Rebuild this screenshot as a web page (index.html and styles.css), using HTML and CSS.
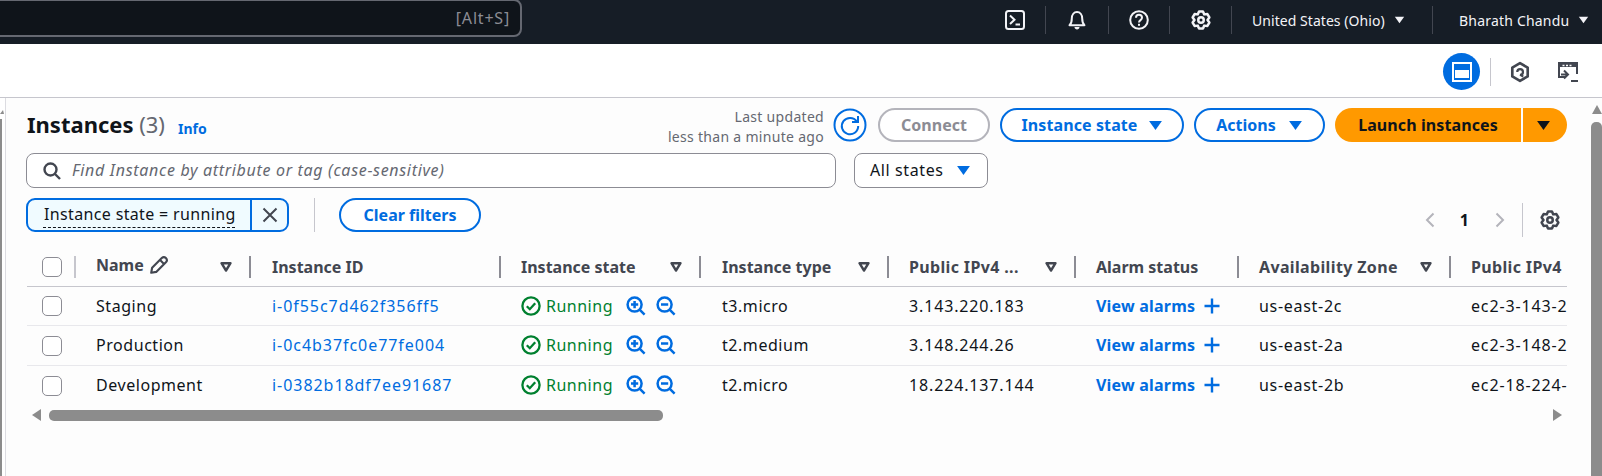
FILE: index.html
```html
<!DOCTYPE html>
<html>
<head>
    <title>Instances | EC2</title>
    <link rel="stylesheet" href="styles.css">
</head>
<body>
    <svg class="defs" width="0" height="0">
        <symbol id="gear" viewBox="0 0 16 16">
            <polygon points="6.43,1.18 9.57,1.18 10.6,3.5 13.12,3.23 14.69,5.95 13.2,8 14.69,10.05 13.12,12.77 10.6,12.5 9.57,14.82 6.43,14.82 5.4,12.5 2.88,12.77 1.31,10.05 2.8,8 1.31,5.95 2.88,3.23 5.4,3.5" fill="none" stroke="currentColor" stroke-width="2" stroke-linejoin="round"/>
            <circle cx="8" cy="8" r="2.2" fill="none" stroke="currentColor" stroke-width="2"/>
        </symbol>
        <symbol id="sort" viewBox="0 0 12 10">
            <polygon points="1.5,1.2 10.5,1.2 6,8.5" fill="none" stroke="currentColor" stroke-width="2.4" stroke-linejoin="round"/>
        </symbol>
        <symbol id="caret" viewBox="0 0 16 12">
            <polygon points="1,1 15,1 8,11" fill="currentColor"/>
        </symbol>
        <symbol id="ok" viewBox="0 0 20 20">
            <circle cx="10" cy="10" r="8.6" fill="none" stroke="currentColor" stroke-width="2.3"/>
            <path d="M5.8 10.2l3 3 5.4-6" fill="none" stroke="currentColor" stroke-width="2.3"/>
        </symbol>
        <symbol id="zoomin" viewBox="0 0 20 20">
            <circle cx="8.6" cy="8.6" r="7" fill="none" stroke="currentColor" stroke-width="2.5"/>
            <path d="M13.6 13.6l5 5M5 8.6h7.2M8.6 5v7.2" fill="none" stroke="currentColor" stroke-width="2.5"/>
        </symbol>
        <symbol id="zoomout" viewBox="0 0 20 20">
            <circle cx="8.6" cy="8.6" r="7" fill="none" stroke="currentColor" stroke-width="2.5"/>
            <path d="M13.6 13.6l5 5M5 8.6h7.2" fill="none" stroke="currentColor" stroke-width="2.5"/>
        </symbol>
        <symbol id="plus" viewBox="0 0 16 16">
            <path d="M8 0.5v15M0.5 8h15" fill="none" stroke="currentColor" stroke-width="2.4"/>
        </symbol>
    </svg>

    <!-- top nav -->
    <header class="topbar">
        <div class="global-search">[Alt+S]</div>
        <nav class="top-nav">
            <div class="nav-item nav-first">
                <svg class="nav-icon" viewBox="0 0 20 20"><rect x="1" y="1" width="18" height="18" rx="2.5" fill="none" stroke="currentColor" stroke-width="2"/><path d="M5 5.5l4.5 4.2L5 14M10.5 14.5h4.5" fill="none" stroke="currentColor" stroke-width="2"/></svg>
            </div>
            <div class="nav-item nav-bell">
                <svg class="nav-icon" viewBox="0 0 20 20"><path d="M2.500 15.200c1.800-1.500 2.300-3 2.300-6.700C4.800 4.800 7 2 10 2s5.200 2.800 5.200 6.500c0 3.700.5 5.200 2.300 6.700z" fill="none" stroke="currentColor" stroke-width="2" stroke-linejoin="round"/><path d="M7.500 17h5c0 1.500-1.200 2.500-2.500 2.500S7.500 18.500 7.500 17z" fill="currentColor"/></svg>
            </div>
            <div class="nav-item nav-help">
                <svg class="nav-icon" viewBox="0 0 20 20"><circle cx="10" cy="10" r="8.800" fill="none" stroke="currentColor" stroke-width="2"/><path d="M7 7.800c0-4 6-4 6 0 0 2.300-3 2.300-3 4.700" fill="none" stroke="currentColor" stroke-width="2"/><rect x="9" y="13.800" width="2" height="2" fill="currentColor"/></svg>
            </div>
            <div class="nav-item nav-gear">
                <svg class="nav-icon"><use href="#gear"/></svg>
            </div>
            <div class="nav-item nav-region">United States (Ohio)<svg class="nav-caret"><use href="#caret"/></svg></div>
            <div class="nav-item nav-user">Bharath Chandu<svg class="nav-caret"><use href="#caret"/></svg></div>
        </nav>
    </header>

    <!-- second bar -->
    <div class="subbar">
        <div class="round-btn">
            <svg width="20" height="20" viewBox="0 0 20 20"><rect x="1" y="1" width="18" height="18" fill="none" stroke="#fff" stroke-width="2"/><rect x="3" y="8" width="14" height="8" fill="#fff"/></svg>
        </div>
        <span class="subbar-sep"></span>
        <svg class="sub-icon sub-hex" viewBox="0 0 20 20"><polygon points="10,2 17,6 17,14 10,18 3,14 3,6" fill="none" stroke="#424650" stroke-width="2.400" stroke-linejoin="round"/><path d="M7.500 10a2.600 2.600 0 1 1 2.600 2.600L13 14" fill="none" stroke="#424650" stroke-width="2"/></svg>
        <svg class="sub-icon sub-term" viewBox="0 0 22 22"><path d="M8 16H2V2h18v11" fill="none" stroke="#424650" stroke-width="2"/><path d="M2 3h18v3H2z" fill="#424650"/><path d="M5.500 4.500h2M9 4.500h2M12.500 4.500h2" stroke="#fff" stroke-width="1.500"/><path d="M7 9.500l4 4-4 4M4 13.500h7M14 20h7" fill="none" stroke="#424650" stroke-width="2"/></svg>
    </div>

    <div class="main">
        <div class="rail"><span class="rail-arrow"></span><span class="rail-bar"></span></div>

        <div class="content">
            <div class="title-row">
                <h1>Instances <span class="count">(3)</span></h1>
                <a class="info" href="#">Info</a>
                <div class="updated">Last updated<br>less than a minute ago</div>
                <div class="refresh">
                    <svg width="34" height="34" viewBox="0 0 34 34"><circle cx="17" cy="17" r="15.500" fill="#fff" stroke="#006ce0" stroke-width="2"/><path d="M23.800 13.500A8.200 8.200 0 1 0 25.200 18" fill="none" stroke="#006ce0" stroke-width="2"/><path d="M25 8v6h-6" fill="none" stroke="#006ce0" stroke-width="2"/></svg>
                </div>
                <button class="btn btn-disabled">Connect</button>
                <button class="btn btn-state">Instance state<svg class="btn-caret"><use href="#caret"/></svg></button>
                <button class="btn btn-actions">Actions<svg class="btn-caret"><use href="#caret"/></svg></button>
                <div class="split">
                    <button class="btn-launch">Launch instances</button>
                    <button class="btn-launch-more"><svg class="btn-caret"><use href="#caret"/></svg></button>
                </div>
            </div>

            <div class="search-row">
                <div class="search-box">
                    <svg class="search-icon" viewBox="0 0 18 18"><circle cx="7.500" cy="7.500" r="6" fill="none" stroke="currentColor" stroke-width="2.400"/><path d="M12 12l5 5" fill="none" stroke="currentColor" stroke-width="2.400"/></svg>
                    <span class="search-hint">Find Instance by attribute or tag (case-sensitive)</span>
                </div>
                <div class="state-select"><span class="state-label">All states</span><svg class="btn-caret"><use href="#caret"/></svg></div>
            </div>

            <div class="filter-row">
                <div class="chip">
                    <span class="chip-text">Instance state = running</span>
                    <span class="chip-close"><svg width="16" height="16" viewBox="0 0 16 16"><path d="M1.500 1.500l13 13M14.500 1.500l-13 13" fill="none" stroke="#424650" stroke-width="2"/></svg></span>
                </div>
                <span class="filter-sep"></span>
                <button class="btn btn-clear">Clear filters</button>
                <div class="pager">
                    <svg class="pager-arrow" viewBox="0 0 10 16"><path d="M8.500 1.500L2 8l6.500 6.500" fill="none" stroke="currentColor" stroke-width="2"/></svg>
                    <span class="page-num">1</span>
                    <svg class="pager-arrow" viewBox="0 0 10 16"><path d="M1.500 1.500L8 8l-6.500 6.500" fill="none" stroke="currentColor" stroke-width="2"/></svg>
                    <span class="pager-sep"></span>
                    <svg class="pager-gear"><use href="#gear"/></svg>
                </div>
            </div>

            <div class="table-wrap">
                <table class="instances">
                    <colgroup>
                        <col class="c-check"><col class="c-name"><col class="c-id"><col class="c-state"><col class="c-type"><col class="c-ip"><col class="c-alarm"><col class="c-az"><col class="c-dns">
                    </colgroup>
                    <thead>
                        <tr>
                            <th><div class="th-in th-check"><span class="box"></span><span class="th-sep th-sep-light th-push"></span></div></th>
                            <th><div class="th-in"><span class="th-name">Name
                                <svg class="pencil" viewBox="0 0 18 18"><path d="M2 16l.8-4.500L11.500 2.800a2.300 2.300 0 0 1 3.700 3.700L6.500 15.200zM10 4.500l3.500 3.500" fill="none" stroke="currentColor" stroke-width="1.900" stroke-linejoin="round"/></svg></span>
                                <svg class="sort"><use href="#sort"/></svg><span class="th-sep"></span></div></th>
                            <th><div class="th-in th-shift">Instance ID<span class="th-sep th-push"></span></div></th>
                            <th><div class="th-in">Instance state<svg class="sort"><use href="#sort"/></svg><span class="th-sep"></span></div></th>
                            <th><div class="th-in th-shift">Instance type<svg class="sort"><use href="#sort"/></svg><span class="th-sep"></span></div></th>
                            <th><div class="th-in th-wide">Public IPv4 ...<svg class="sort"><use href="#sort"/></svg><span class="th-sep"></span></div></th>
                            <th><div class="th-in">Alarm status<span class="th-sep th-push"></span></div></th>
                            <th><div class="th-in th-wide">Availability Zone<svg class="sort"><use href="#sort"/></svg><span class="th-sep"></span></div></th>
                            <th><div class="th-in th-wide">Public IPv4</div></th>
                        </tr>
                    </thead>
                    <tbody>
                        <tr>
                            <td class="check-cell"><span class="box"></span></td>
                            <td>Staging</td>
                            <td class="num-id"><a href="#">i-0f55c7d462f356ff5</a></td>
                            <td><div class="state"><svg class="ok"><use href="#ok"/></svg>Running<svg class="mag mag-first"><use href="#zoomin"/></svg><svg class="mag"><use href="#zoomout"/></svg></div></td>
                            <td class="td-type">t3.micro</td>
                            <td class="num-ip">3.143.220.183</td>
                            <td><a class="alarm" href="#">View alarms<svg class="plus"><use href="#plus"/></svg></a></td>
                            <td class="az">us-east-2c</td>
                            <td class="num-ip">ec2-3-143-220-183</td>
                        </tr>
                        <tr>
                            <td class="check-cell"><span class="box"></span></td>
                            <td>Production</td>
                            <td class="num-id"><a href="#">i-0c4b37fc0e77fe004</a></td>
                            <td><div class="state"><svg class="ok"><use href="#ok"/></svg>Running<svg class="mag mag-first"><use href="#zoomin"/></svg><svg class="mag"><use href="#zoomout"/></svg></div></td>
                            <td class="td-type">t2.medium</td>
                            <td class="num-ip">3.148.244.26</td>
                            <td><a class="alarm" href="#">View alarms<svg class="plus"><use href="#plus"/></svg></a></td>
                            <td class="az">us-east-2a</td>
                            <td class="num-ip">ec2-3-148-244-26</td>
                        </tr>
                        <tr>
                            <td class="check-cell"><span class="box"></span></td>
                            <td>Development</td>
                            <td class="num-id"><a href="#">i-0382b18df7ee91687</a></td>
                            <td><div class="state"><svg class="ok"><use href="#ok"/></svg>Running<svg class="mag mag-first"><use href="#zoomin"/></svg><svg class="mag"><use href="#zoomout"/></svg></div></td>
                            <td class="td-type">t2.micro</td>
                            <td class="num-ip">18.224.137.144</td>
                            <td><a class="alarm" href="#">View alarms<svg class="plus"><use href="#plus"/></svg></a></td>
                            <td class="az">us-east-2b</td>
                            <td class="num-ip">ec2-18-224-137-144</td>
                        </tr>
                    </tbody>
                </table>
            </div>

            <div class="hscroll">
                <span class="arrow-left"></span>
                <span class="hthumb"></span>
                <span class="arrow-right"></span>
            </div>
        </div>

        <div class="vscroll">
            <span class="arrow-up"></span>
            <span class="vthumb"></span>
        </div>
    </div>
</body>
</html>
```

FILE: styles.css
```css
* {
    box-sizing: border-box;
}

html, body {
    height: 100%;
}

body {
    margin: 0;
    height: 100vh;
    overflow: hidden;
    display: flex;
    flex-direction: column;
    font-family: "Noto Sans", "Open Sans", Arial, sans-serif;
    font-size: 16px;
    color: #0f141a;
    background-color: #fff;
}

.defs {
    position: absolute;
}

a {
    color: #006ce0;
    text-decoration: none;
}

/* ---- top nav ---- */
.topbar {
    flex: none;
    height: 44px;
    display: flex;
    background-color: #161d26;
}

.global-search {
    width: 532px;
    height: 38px;
    margin-left: -10px;
    margin-top: -1px;
    padding-right: 10px;
    display: flex;
    align-items: center;
    justify-content: flex-end;
    flex: none;
    background-color: #0f141a;
    border: 2px solid #656871;
    border-radius: 8px;
    color: #8c8c94;
    font-size: 16px;
    letter-spacing: 0.8px;
}

.top-nav {
    margin-left: auto;
    padding-bottom: 4px;
    display: flex;
    align-items: center;
    color: #f3f3f7;
    font-size: 14px;
}

.nav-item {
    height: 28px;
    display: flex;
    align-items: center;
    justify-content: center;
    border-left: 1px solid #424650;
}

.nav-first {
    width: 60px;
    border-left: none;
}

.nav-bell {
    width: 63px;
}

.nav-help {
    width: 61px;
}

.nav-gear {
    width: 62px;
}

.nav-region {
    width: 201px;
    justify-content: flex-start;
    padding-left: 20px;
    letter-spacing: 0.05px;
}

.nav-user {
    width: 170px;
    justify-content: flex-start;
    padding-left: 26px;
    letter-spacing: 0.2px;
}

.nav-icon {
    width: 20px;
    height: 20px;
}

.nav-caret {
    width: 11px;
    height: 8px;
    margin-left: 9px;
}

/* ---- second bar ---- */
.subbar {
    flex: none;
    height: 54px;
    display: flex;
    align-items: center;
    padding-top: 2px;
    padding-right: 23px;
    justify-content: flex-end;
    border-bottom: 1px solid #c6c6cd;
    background-color: #fff;
}

.round-btn {
    width: 37px;
    height: 37px;
    border-radius: 50%;
    background-color: #006ce0;
    display: flex;
    align-items: center;
    justify-content: center;
}

.subbar-sep {
    width: 1px;
    height: 28px;
    margin-left: 10px;
    background-color: #c6c6cd;
}

.sub-icon {
    width: 22px;
    height: 22px;
}

.sub-hex {
    margin-left: 18px;
}

.sub-term {
    margin-left: 26px;
}

/* ---- main area ---- */
.main {
    flex: 1;
    min-height: 0;
    display: flex;
}

.rail {
    width: 6px;
    flex: none;
    display: flex;
    flex-direction: column;
    border-right: 1px solid #dcdce1;
    background-color: #fff;
}

.rail-arrow {
    margin-top: 12px;
    width: 0;
    height: 0;
    border-left: 3px solid transparent;
    border-right: 1px solid transparent;
    border-bottom: 4px solid #8c8c8c;
}

.rail-bar {
    margin-top: 5px;
    flex: 1;
    width: 2px;
    background-color: #8c8c8c;
}

.content {
    flex: 1;
    min-width: 0;
    padding: 10px 24px 0 20px;
    background-color: #fdfdfd;
}

.vscroll {
    width: 11px;
    flex: none;
    display: flex;
    flex-direction: column;
    align-items: center;
    background-color: #fdfdfd;
}

.arrow-up {
    margin-top: 7px;
    width: 0;
    height: 0;
    border-left: 5px solid transparent;
    border-right: 5px solid transparent;
    border-bottom: 9px solid #8c8c8c;
}

.vthumb {
    margin-top: 8px;
    flex: 1;
    width: 11px;
    border-radius: 5px 5px 0 0;
    background-color: #8c8c8c;
}

/* ---- title row ---- */
.title-row {
    height: 34px;
    display: flex;
    align-items: center;
}

h1 {
    margin: -2px 0 0 1px;
    font-size: 22px;
    font-weight: 700;
    white-space: nowrap;
}

.count {
    color: #656871;
    font-weight: 400;
}

.info {
    margin-left: 13px;
    margin-top: 6px;
    font-size: 14px;
    font-weight: 700;
}

.updated {
    margin-left: auto;
    margin-top: 3px;
    text-align: right;
    color: #656871;
    font-size: 14px;
    line-height: 20px;
    letter-spacing: 0.3px;
}

.refresh {
    width: 34px;
    height: 34px;
    margin: 0 11px 0 9px;
}

.btn {
    height: 34px;
    display: flex;
    align-items: center;
    justify-content: center;
    padding: 0 20px;
    border: 2px solid #006ce0;
    border-radius: 20px;
    background-color: #fff;
    color: #006ce0;
    font-family: inherit;
    font-size: 16px;
    font-weight: 700;
    white-space: nowrap;
}

.btn-disabled {
    width: 112px;
    border-color: #b4b4bb;
    color: #8c8c94;
}

.btn-state {
    width: 184px;
    margin-left: 10px;
    letter-spacing: 0.1px;
}

.btn-state .btn-caret {
    margin-left: 10px;
}

.btn-actions {
    width: 131px;
    margin: 0 10px;
}

.btn-caret {
    width: 15px;
    height: 11px;
    margin-left: 12px;
    flex: none;
}

.split {
    display: flex;
    height: 34px;
}

.btn-launch,
.btn-launch-more {
    border: none;
    background-color: #ff9900;
    color: #0f141a;
    font-family: inherit;
    font-size: 16px;
    font-weight: 700;
    display: flex;
    align-items: center;
    justify-content: center;
    padding: 0;
}

.btn-launch {
    width: 186px;
    border-radius: 20px 0 0 20px;
    letter-spacing: 0.1px;
}

.btn-launch-more {
    width: 44px;
    margin-left: 2px;
    padding-right: 4px;
    border-radius: 0 20px 20px 0;
}

.btn-launch-more .btn-caret {
    margin-left: 0;
}

/* ---- search row ---- */
.search-row {
    display: flex;
    margin-top: 11px;
}

.search-box {
    width: 810px;
    height: 35px;
    display: flex;
    align-items: center;
    padding-left: 16px;
    border: 1px solid #8c8c94;
    border-radius: 8px;
    background-color: #fff;
    color: #656871;
    font-style: italic;
}

.search-hint {
    padding-bottom: 2px;
    letter-spacing: 0.68px;
    white-space: nowrap;
}

.search-icon {
    width: 18px;
    height: 18px;
    margin-right: 11px;
    flex: none;
    color: #424650;
}

.state-select {
    width: 134px;
    height: 35px;
    margin-left: 18px;
    display: flex;
    align-items: center;
    padding-left: 15px;
    border: 1px solid #8c8c94;
    border-radius: 8px;
    background-color: #fff;
}

.state-label {
    padding-bottom: 2px;
    letter-spacing: 0.6px;
}

.state-select .btn-caret {
    color: #006ce0;
}

/* ---- filter row ---- */
.filter-row {
    height: 34px;
    margin-top: 10px;
    display: flex;
    align-items: center;
}

.chip {
    width: 263px;
    height: 34px;
    display: flex;
    border: 2px solid #006ce0;
    border-radius: 9px;
    background-color: #f0fbff;
}

.chip-text {
    flex: 1;
    padding-left: 16px;
    line-height: 29px;
    white-space: nowrap;
    letter-spacing: 0.35px;
    position: relative;
}

.chip-text::after {
    content: "";
    position: absolute;
    left: 15px;
    right: 15px;
    bottom: 2px;
    border-bottom: 1px dashed #0f141a;
}

.chip-close {
    width: 37px;
    display: flex;
    align-items: center;
    justify-content: center;
    border-left: 2px solid #006ce0;
}

.filter-sep {
    width: 1px;
    height: 34px;
    margin-left: 25px;
    background-color: #c6c6cd;
}

.btn-clear {
    width: 142px;
    margin-left: 24px;
}

.pager {
    margin-left: auto;
    margin-top: 10px;
    margin-right: 7px;
    display: flex;
    align-items: center;
    color: #b4b4bb;
}

.pager-arrow {
    width: 10px;
    height: 16px;
}

.page-num {
    margin: 0 26px 0 25px;
    color: #0f141a;
    font-weight: 700;
}

.pager-sep {
    width: 1px;
    height: 34px;
    margin: 0 17px 0 17px;
    background-color: #c6c6cd;
}

.pager-gear {
    width: 20px;
    height: 20px;
    color: #424650;
}

/* ---- table ---- */
.table-wrap {
    margin: 15px 0 0 1px;
    overflow: hidden;
}

.instances {
    table-layout: fixed;
    width: 1540px;
    border-collapse: collapse;
}

.c-check { width: 49px; }
.c-name { width: 175px; }
.c-id { width: 250px; }
.c-state { width: 200px; }
.c-type { width: 188px; }
.c-ip { width: 187px; }
.c-alarm { width: 163px; }
.c-az { width: 212px; }
.c-dns { width: 116px; }

.instances th {
    height: 39px;
    padding: 0;
    border-bottom: 1px solid #c6c6cd;
    color: #424650;
    font-weight: 700;
    text-align: left;
}

.th-in {
    display: flex;
    align-items: center;
    padding-top: 1px;
    padding-left: 20px;
    white-space: nowrap;
}

.th-check {
    padding-left: 15px;
}

.th-shift {
    padding-left: 21px;
}

.th-wide {
    letter-spacing: 0.35px;
}

.th-name {
    display: flex;
    align-items: center;
    margin-top: -4px;
}

.pencil {
    width: 20px;
    height: 20px;
    margin-left: 5px;
}

.sort {
    width: 12px;
    height: 10px;
    margin-left: auto;
    margin-right: 17px;
}

.th-sep {
    width: 2px;
    height: 22px;
    background-color: #8c8c94;
    flex: none;
}

.th-push {
    margin-left: auto;
}

.th-sep-light {
    background-color: #c6c6cd;
}

.instances td {
    height: 39.500px;
    padding: 0 0 0 20px;
    border-bottom: 1px solid #e8e8ec;
    white-space: nowrap;
    overflow: hidden;
    letter-spacing: 0.55px;
}

.instances tbody tr:last-child td {
    border-bottom: none;
}

.instances .check-cell {
    padding-left: 15px;
}

.instances .td-type {
    padding-left: 21px;
}

.instances .num-id {
    padding-left: 21px;
    letter-spacing: 0.95px;
}

.instances .num-ip {
    letter-spacing: 0.85px;
}

.instances .az {
    letter-spacing: 0.7px;
}

.box {
    display: block;
    width: 20px;
    height: 20px;
    border: 1px solid #8c8c94;
    border-radius: 5px;
    background-color: #fff;
}

td .box {
    margin-top: 1px;
}

.state {
    display: flex;
    align-items: center;
    color: #00802f;
    letter-spacing: 0.5px;
}

.ok {
    width: 20px;
    height: 20px;
    margin-right: 5px;
}

.mag {
    width: 20px;
    height: 20px;
    margin-left: 10px;
    color: #006ce0;
}

.mag-first {
    margin-left: 13px;
}

.alarm {
    display: flex;
    align-items: center;
    font-weight: 700;
    letter-spacing: 0.2px;
}

.plus {
    width: 16px;
    height: 16px;
    margin-left: 9px;
}

/* ---- bottom scrollbar ---- */
.hscroll {
    margin-top: 5px;
    height: 11px;
    display: flex;
    align-items: center;
}

.arrow-left {
    margin-left: 6px;
    width: 0;
    height: 0;
    border-top: 6px solid transparent;
    border-bottom: 6px solid transparent;
    border-right: 9px solid #8c8c8c;
}

.hthumb {
    margin-left: 8px;
    width: 614px;
    height: 11px;
    border-radius: 5px;
    background-color: #8c8c8c;
}

.arrow-right {
    margin-left: auto;
    margin-right: 5px;
    width: 0;
    height: 0;
    border-top: 6px solid transparent;
    border-bottom: 6px solid transparent;
    border-left: 9px solid #8c8c8c;
}
```
